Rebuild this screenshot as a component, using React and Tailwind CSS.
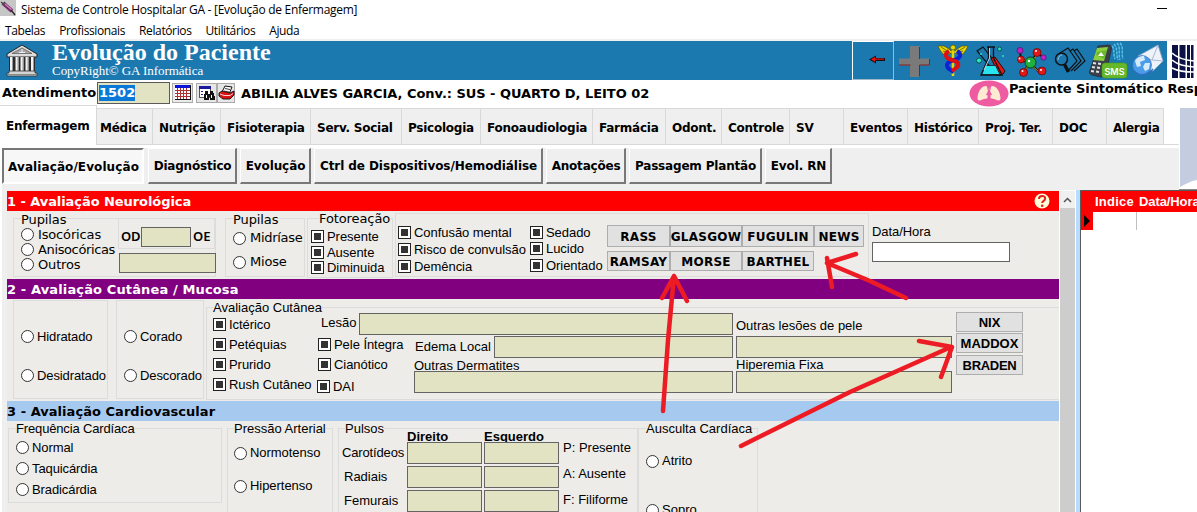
import React from "react";

const verdana = "font-['DejaVu_Sans',sans-serif]";
const arial = "font-['Liberation_Sans',sans-serif]";

/* ---------- form primitives ---------- */

function Radio({ label, className = "", text = "" }) {
  return (
    <div className={`flex shrink-0 items-center whitespace-nowrap ${className}`}>
      <span className="h-[13px] w-[13px] shrink-0 rounded-full border border-[#333] bg-white" />
      <span className={text}>{label}</span>
    </div>
  );
}

function Check({ label, className = "" }) {
  return (
    <div className={`flex h-[13px] shrink-0 items-center gap-[3px] whitespace-nowrap ${className}`}>
      <span className="flex h-[13px] w-[13px] shrink-0 items-center justify-center border border-[#222] bg-white">
        <span className="h-[7px] w-[7px] bg-[#333]" />
      </span>
      <span className="pt-px tracking-[-0.05px]">{label}</span>
    </div>
  );
}

function Field({ className = "" }) {
  return <div className={`shrink-0 border border-[#646464] bg-[#e1e3c3] ${className}`} />;
}

function Legend({ children, className = "" }) {
  return <div className={`relative h-4 shrink-0 self-start whitespace-nowrap bg-[#edece8] ${className}`}>{children}</div>;
}

function Box({ children, className = "" }) {
  return <div className={`flex shrink-0 border border-[#dcdcdc] ${className}`}>{children}</div>;
}

function Push({ children, className = "" }) {
  return (
    <button className={`flex shrink-0 items-center justify-center whitespace-nowrap border border-[#adadad] bg-[#e1e1e1] font-bold ${className}`}>
      {children}
    </button>
  );
}

function SectionBar({ children, className = "" }) {
  return (
    <div className={`flex h-5 shrink-0 items-center justify-between whitespace-nowrap pt-px text-[13px] font-bold leading-4 ${verdana} ${className}`}>
      {children}
    </div>
  );
}

/* ---------- icons ---------- */

function Syringe() {
  return (
    <svg width="16" height="16" viewBox="0 0 16 16" className="shrink-0">
      <rect width="16" height="16" fill="#c6c6c6" />
      <path d="M1 2l4 3M2 5l3-3" stroke="#444" strokeWidth="1.4" />
      <path d="M4 4l8 7" stroke="#7a2a6a" strokeWidth="4" />
      <path d="M5 4l7 6" stroke="#c88ab8" strokeWidth="1.2" />
      <path d="M11 10l4 5" stroke="#222" strokeWidth="1.3" />
    </svg>
  );
}

function Temple() {
  return (
    <svg width="34" height="34" viewBox="0 0 34 34" className="shrink-0">
      <path d="M17 1L2 10v3h30v-3z" fill="#dcdcdc" stroke="#222" />
      <path d="M17 4L7 9.500h20z" fill="#a8a8a8" stroke="#555" strokeWidth=".7" />
      <path d="M14 8.500h6M17 5v4" stroke="#eee" />
      <rect x="4" y="13" width="26" height="15" fill="#2b2b2b" />
      <path d="M6.500 13v15M12 13v15M17 13v15M22 13v15M27.500 13v15" stroke="#f2f2f2" strokeWidth="3" />
      <path d="M7.500 13v15M13 13v15M18 13v15M23 13v15M28.500 13v15" stroke="#9a9a9a" strokeWidth="1" />
      <path d="M4 27h26v2h2v3H2v-3h2z" fill="#d4d4d4" stroke="#333" strokeWidth=".8" />
      <path d="M2 30.500h30" stroke="#777" strokeWidth=".8" />
    </svg>
  );
}

function CalendarIcon() {
  return (
    <svg width="21" height="20" viewBox="0 0 21 20" shapeRendering="crispEdges">
      <rect x=".5" y=".5" width="20" height="19" fill="#eaeaea" stroke="#aaa" />
      <rect x="3" y="2" width="16" height="15" fill="#111" />
      <rect x="3" y="2" width="15" height="3" fill="#0a14d8" />
      <rect x="3" y="5" width="15" height="11" fill="#fff" />
      <path d="M3 7.500h15M3 10.500h15M3 13.500h15M5.500 5v11M8.500 5v11M11.500 5v11M14.500 5v11" stroke="#b03030" />
    </svg>
  );
}

function FindIcon() {
  return (
    <svg width="21" height="20" viewBox="0 0 21 20" shapeRendering="crispEdges">
      <rect x=".5" y=".5" width="20" height="19" fill="#e6e6e6" stroke="#aaa" />
      <rect x="3" y="3" width="11" height="11" fill="#fff" stroke="#555" />
      <rect x="3" y="3" width="12" height="3" fill="#1a1a9c" />
      <path d="M5 8h2M9 8h2M5 11h2" stroke="#1a1a9c" />
      <path d="M9 8h3v3h2V8h3l2 6v3h-5v-3h-1v3H8v-3z" fill="#111" />
      <path d="M10 12h1v3h-1zM15 12h1v3h-1z" fill="#fff" />
    </svg>
  );
}

function PrintIcon() {
  return (
    <svg width="18" height="20" viewBox="0 0 18 20">
      <rect x=".5" y=".5" width="17" height="19" fill="#e6e6e6" stroke="#aaa" />
      <path d="M5 9l3-6 7 1-3 7z" fill="#fff" stroke="#111" />
      <path d="M8 5.500l5 1M7 8l5 1" stroke="#111" strokeWidth=".8" />
      <path d="M2 10l3-2 8 2 4-2v4l-4 4H6l-4-3z" fill="#d81414" stroke="#111" strokeWidth=".9" />
      <path d="M3 11l4 1.500h6l3-2" stroke="#fff" strokeWidth=".8" fill="none" />
    </svg>
  );
}

function BackArrow() {
  return (
    <svg width="18" height="11" viewBox="0 0 18 11">
      <path d="M1 5.500L8 1.500V4h9v3H8v2.500z" fill="#111" />
      <path d="M3 5.300L7 3v1.500h9v1.300H7V8z" fill="#f01010" />
    </svg>
  );
}

function CrossIcon() {
  return (
    <svg width="31" height="31" viewBox="0 0 31 31">
      <path d="M11 0h10v12.500h10v7H21V31H11V19.500H0v-7h11z" fill="#7a7a7a" />
      <path d="M20.500 1v12M0 19h11.500M20.500 19H30.500V13M20.500 19v11.500" stroke="#8b1c1c" fill="none" />
    </svg>
  );
}

function Caduceus() {
  return (
    <svg width="32" height="33" viewBox="0 0 32 33" fill="none">
      <path d="M1 2h6l5 3 2 2 4 0 2-2 5-3h6l-2 4-3 4-4 1-4-2-4 0-4 2-4-1-3-4z" fill="#e8d800" stroke="#5a5200" strokeWidth=".7" />
      <path d="M4 3l8 5M6 7l5 2M28 3l-8 5M26 7l-5 2" stroke="#5a5200" strokeWidth=".8" />
      <path d="M16 3v29" stroke="#e8d800" strokeWidth="2.500" />
      <path d="M20 7c5 3 4 7-3 9s-9 5-5 9l5 3" stroke="#1020d8" strokeWidth="4" />
      <path d="M12 7c-5 3-4 7 3 9s8 5 4 8l-4 3" stroke="#e01010" strokeWidth="4" />
      <circle cx="16" cy="3.500" r="2.500" fill="#e8d800" stroke="#5a5200" strokeWidth=".7" />
    </svg>
  );
}

function Flasks() {
  return (
    <svg width="32" height="33" viewBox="0 0 32 33" fill="none">
      <path d="M2 7l6-4 20 25-2 3-4 0z" fill="#1b79b0" stroke="#111" strokeWidth="1.200" />
      <path d="M16 14l4-1 10 14-2 3-4 1z" fill="#e81414" stroke="#111" />
      <path d="M12 3h8M13.500 3v11L6 31h21L18.500 14V3" stroke="#111" strokeWidth="1.300" />
      <path d="M10.500 21.500h10L25 30.500H6.800z" fill="#28e4f0" stroke="#111" strokeWidth=".8" />
      <path d="M14.500 4v10L9 26" stroke="#eee" strokeWidth=".8" />
      <circle cx="4" cy="16.500" r="2.600" fill="#28e4c8" stroke="#0a5048" />
      <circle cx="24.500" cy="5" r="2" fill="#28e4c8" stroke="#0a5048" />
      <circle cx="28" cy="12" r="1" fill="#28e4c8" />
      <circle cx="6" cy="10" r="1" fill="#28e4c8" />
    </svg>
  );
}

function Molecule() {
  return (
    <svg width="32" height="32" viewBox="0 0 32 32">
      <path d="M5 5l1 9 9 3 7-10M15 17l-7 9M15 17l9 9M22 7l6 4" stroke="#111" strokeWidth="2" fill="none" />
      <path d="M6 13l9 4 8-9M8 26l7-8 9 8" stroke="#e8d820" strokeWidth=".8" fill="none" />
      <circle cx="15.500" cy="16.500" r="5.500" fill="#20b040" stroke="#0a4018" />
      <g fill="#e01818" stroke="#600" strokeWidth=".7">
        <circle cx="6" cy="13.500" r="3.500" />
        <circle cx="22" cy="6.500" r="4" />
        <circle cx="8.500" cy="26.500" r="4" />
        <circle cx="27" cy="25" r="4" />
      </g>
      <g fill="#c020c8" stroke="#501050" strokeWidth=".7">
        <circle cx="5" cy="4.500" r="3" />
        <circle cx="28.500" cy="11.500" r="2.700" />
      </g>
      <g fill="#fff">
        <circle cx="4.500" cy="12.500" r="1" /><circle cx="21" cy="5" r="1" /><circle cx="7.500" cy="25" r="1" />
        <circle cx="26" cy="24" r="1" /><circle cx="14" cy="15" r="1.200" />
      </g>
    </svg>
  );
}

function SearchPapers() {
  return (
    <svg width="32" height="28" viewBox="0 0 32 28" fill="none" stroke="#111" strokeWidth="1.200">
      <path d="M6 6l8-5 9 13-9 10M16 4l3-2 8 12-10 10M20 4l3-2 8 12-11 10" />
      <circle cx="7.500" cy="12" r="6" fill="#1b79b0" strokeWidth="1.500" />
      <path d="M4 13c0-3 2-5 4-5" stroke="#9cd" strokeWidth=".9" />
      <path d="M10.500 17.500l4 7.500" strokeWidth="3.500" />
    </svg>
  );
}

function SmsPhone() {
  return (
    <svg width="40" height="37" viewBox="0 0 40 37">
      <path d="M10 4l10-1c3 0 4 2 3.500 4L18 31c-1 3-3 4-6 4l-8-2c-3-1-3-3-2-5z" fill="#3c4048" stroke="#222" strokeWidth=".6" />
      <path d="M9 6l11-1-4 14-11-1z" fill="#8cd040" />
      <path d="M9 10l10-2-3 9-8-4z" fill="#48a018" opacity=".5" />
      <path d="M10 14l3-4 3 4z" fill="#fff" />
      <path d="M5 21l3 .4M10 21.600l3 .4M4 25l3 .4M9 25.600l3 .4M3 29l3 .4M8 29.600l3 .4" stroke="#dfe3e8" strokeWidth="2" />
      <path d="M24 4c3 3 1 8 3 13M26 2c4 4 2 11 4 16M29 1c4 4 1 11 3 17M32 1c4 4 1 10 3 16" stroke="#58c8e8" strokeWidth="1.400" strokeDasharray="3 1" fill="none" />
      <rect x="14" y="21" width="25" height="15" rx="3" fill="#66b82a" stroke="#4c9a18" strokeWidth=".6" />
      <text x="26.500" y="32.500" textAnchor="middle" fontFamily="Inter, sans-serif" fontSize="9" fontWeight="600" fill="#fff">SMS</text>
    </svg>
  );
}

function MailGlobe() {
  return (
    <svg width="34" height="34" viewBox="0 0 34 34">
      <path d="M7 12L27 1l5 16-10 10-12-3z" fill="#eef3fa" stroke="#8ba3c4" strokeWidth=".8" />
      <path d="M7 12l14 4L27 1M21 16l11 1" stroke="#a9b9d0" fill="none" />
      <circle cx="11" cy="21" r="9.500" fill="#4a9be8" stroke="#2a68b0" strokeWidth=".6" />
      <path d="M4 17c2-4 6-5 9-5l1 4-5 2 1 4-4 1zM14 19l5 0-1 6-4 2-2-4z" fill="#d5ebfc" />
      <path d="M3 27c6 6 13 5 19-2" stroke="#2f6fc0" strokeWidth="1.500" fill="none" />
    </svg>
  );
}

function HospitalMark() {
  return (
    <svg width="22" height="33" viewBox="0 0 22 33">
      <rect width="22" height="33" fill="#fff" />
      <g fill="#0b1145">
        <rect x="0" y="0" width="6" height="33" />
        <rect x="7.500" y="0" width="6" height="33" />
        <rect x="15" y="0" width="3" height="33" />
        <rect x="19" y="0" width="2.500" height="33" />
      </g>
      <path d="M0 8c5 5 12 7 22 8M0 15c6 5 12 6 22 7M0 23c6 3 12 4 22 4" stroke="#fff" strokeWidth="1.600" fill="none" />
    </svg>
  );
}

function Lungs() {
  return (
    <svg width="40" height="27" viewBox="0 0 40 27" className="shrink-0">
      <ellipse cx="20" cy="13.500" rx="19.500" ry="13" fill="#ef5ba1" />
      <path d="M17 6c-5 0-8 6-8.500 12 0 3 2 3 5 1.500 2-.8 4.500-.5 5-1.500V12l1.500-6 1.500 6v6c.5 1 3 .7 5 1.500 3 1.500 5 1.500 5-1.500C31 12 28 6 23 6c-1 0-1.500 2-1.500 4h-3C18.500 8 18 6 17 6z" fill="#fdebd3" />
      <path d="M20 4v8l-2.500 3M20 12l2.500 3" stroke="#ef5ba1" strokeWidth="1.500" fill="none" />
    </svg>
  );
}

function HelpBadge() {
  return (
    <svg width="16" height="16" viewBox="0 0 16 16" className="-mt-px">
      <circle cx="8" cy="8" r="7.500" fill="#fffdd8" />
      <path d="M5 6c0-4 6.200-4 6.200-.5C11.200 8 8.200 7.800 8.200 10" stroke="#e02020" strokeWidth="2" fill="none" />
      <circle cx="8.200" cy="12.700" r="1.300" fill="#e02020" />
    </svg>
  );
}

/* ---------- header ---------- */

function Header() {
  return (
    <div className="flex h-10 shrink-0 bg-white">
      <div className="flex h-[39px] w-[1167px] shrink-0 bg-[#1c79b0]">
        <div className="pl-[5px] pt-[3px]"><Temple /></div>
        <div className="ml-[13px] w-[800px] font-['Liberation_Serif',serif] text-white">
          <h1 className="-mt-px text-[24px] font-bold leading-6">Evolução do Paciente</h1>
          <p className="-mt-px text-[13px] leading-4 tracking-[-0.04px]">CopyRight© GA Informática</p>
        </div>
        <button className="flex w-[42px] items-center justify-center border border-b-[#9fb8c8] border-l-white border-r-[#9fb8c8] border-t-white pb-[2px] pl-[7px]">
          <BackArrow />
        </button>
        <div className="ml-[5px] flex items-start">
          <div className="w-[38px] pt-[5px]"><CrossIcon /></div>
          <div className="w-[38px] pt-[3px]"><Caduceus /></div>
          <div className="w-[40px] pt-[3px]"><Flasks /></div>
          <div className="w-[39px] pt-[5px]"><Molecule /></div>
          <div className="w-[34px] pt-[6px]"><SearchPapers /></div>
          <div className="w-[43px] pt-px"><SmsPhone /></div>
          <div className="w-[34px] pt-[3px]"><MailGlobe /></div>
        </div>
      </div>
      <div className="pl-[5px] pt-1"><HospitalMark /></div>
    </div>
  );
}

const tabs = [
  ["Médica", "w-[55px] pl-[3px]"],
  ["Nutrição", "w-[68px] pl-[6px]"],
  ["Fisioterapia", "w-[90px] pl-[6px]"],
  ["Serv. Social", "w-[91px] pl-[6px]"],
  ["Psicologia", "w-[79px] pl-[6px]"],
  ["Fonoaudiologia", "w-[112px] pl-[6px]"],
  ["Farmácia", "w-[73px] pl-[6px]"],
  ["Odont.", "w-[56px] pl-[6px]"],
  ["Controle", "w-[68px] pl-[6px]"],
  ["SV", "w-[54px] pl-[6px]"],
  ["Eventos", "w-[64px] pl-[6px]"],
  ["Histórico", "w-[71px] pl-[6px]"],
  ["Proj. Ter.", "w-[74px] pl-[6px]"],
  ["DOC", "w-[54px] pl-[6px]"],
  ["Alergia", "w-[58px] border-r pl-[6px]"],
];

const tools = [
  ["Diagnóstico", "ml-1 w-[89px] tracking-[-0.2px]"],
  ["Evolução", "ml-[3px] w-[71px] tracking-[-0.1px]"],
  ["Ctrl de Dispositivos/Hemodiálise", "ml-[3px] w-[229px] tracking-[-0.08px]"],
  ["Anotações", "ml-[3px] w-[80px] tracking-[-0.2px]"],
  ["Passagem Plantão", "ml-[3px] w-[133px] tracking-[-0.18px]"],
  ["Evol. RN", "ml-[3px] w-[67px] tracking-[-0.1px]"],
];

function Navigation() {
  return (
    <div className={`flex h-[85px] shrink-0 text-xs font-bold leading-4 ${verdana}`}>
      <div className="flex w-[1179px] shrink-0 flex-col">
        <div className="flex h-10 shrink-0 whitespace-nowrap tracking-[-0.24px]">
          <div className="w-[97px] border-r border-t border-[#d9d9d9] pl-[6px] pt-3">Enfermagem</div>
          <div className="flex grow items-end border-b border-[#d9d9d9]">
            {tabs.map(([name, cls], i) => (
              <div key={name} className={`h-9 shrink-0 border-t border-[#d9d9d9] bg-[#efefef] pt-[11px] ${i ? "border-l" : ""} ${cls}`}>{name}</div>
            ))}
          </div>
        </div>
        <div className="ml-[2px] mt-[3px] flex h-[42px] shrink-0 bg-[#efefef]">
          <div className="flex h-9 w-[142px] shrink-0 items-center justify-center border-2 border-b-white border-l-[#777] border-r-white border-t-[#777] bg-[#f7f7f7] pl-px pt-px tracking-[0.09px]">
            Avaliação/Evolução
          </div>
          {tools.map(([name, cls]) => (
            <button key={name} className={`flex h-9 shrink-0 items-center justify-center whitespace-nowrap border-b-2 border-l border-r-2 border-t border-b-[#787878] border-l-white border-r-[#787878] border-t-white pl-px ${cls}`}>
              {name}
            </button>
          ))}
        </div>
      </div>
      <svg width="18" height="85" viewBox="0 0 18 85">
        <path d="M1 3h17v72C11 76 5 80 1 82z" fill="#c4cde0" />
        <path d="M0 84.500h18" stroke="#888" />
      </svg>
    </div>
  );
}

/* ---------- sections ---------- */

function Neurological() {
  return (
    <>
      <SectionBar className="bg-[#ff0000] pr-[9px] tracking-[-0.07px] text-white">
        <span>1 - Avaliação Neurológica</span>
        <HelpBadge />
      </SectionBar>
      <div className={`flex h-[68px] shrink-0 items-start pl-[6px] text-[13px] leading-4 ${arial}`}>
        <Box className={`mt-[7px] h-[59px] w-[203px] ${verdana}`}>
          <div className="flex w-[104px] shrink-0 flex-col pl-[7px]">
            <Legend className="-mt-[7px] mb-[-1px] tracking-[-0.1px]">Pupilas</Legend>
            <Radio label="Isocóricas" className="h-[15px] gap-1" text="pt-px tracking-[-0.15px]" />
            <Radio label="Anisocóricas" className="h-[15px] gap-1" text="pt-px tracking-[-0.37px]" />
            <Radio label="Outros" className="h-[15px] gap-1" text="pt-px tracking-[-0.15px]" />
          </div>
          <div className="flex flex-col">
            <div className="flex h-[30px] w-[97px] border border-t-0 border-[#dcdcdc] pl-[2px] font-['Noto_Sans',sans-serif] text-[13px] font-semibold">
              <span className="mt-[9px] w-5 tracking-[-0.2px]">OD</span>
              <Field className="mt-2 h-5 w-[50px]" />
              <span className="ml-[2px] mt-[9px]">OE</span>
            </div>
            <Field className="ml-px mt-1 h-5 w-[97px]" />
          </div>
        </Box>
        <Box className={`ml-[9px] mt-[7px] h-[59px] w-[80px] flex-col pl-[7px] ${verdana}`}>
          <Legend className="-mt-[7px] tracking-[-0.1px]">Pupilas</Legend>
          <Radio label="Midríase" className="mt-[2px] h-4 gap-1" text="tracking-[-0.3px]" />
          <Radio label="Miose" className="mt-2 h-4 gap-1" text="tracking-[-0.2px]" />
        </Box>
        <Box className="ml-[2px] mt-[7px] h-[60px] w-[86px] flex-col pl-[3px]">
          <Legend className={`-mt-2 ml-[8px] tracking-[-0.1px] ${verdana}`}>Fotoreação</Legend>
          <Check label="Presente" className="mt-[3px]" />
          <Check label="Ausente" className="mt-[3px]" />
          <Check label="Diminuida" className="mt-[2px]" />
        </Box>
        <Box className="ml-[2px] mt-[2px] h-[64px] w-[474px]">
          <div className="w-[132px] pl-[2px]">
            <Check label="Confusão mental" className="mt-3" />
            <Check label="Risco de convulsão" className="mt-1" />
            <Check label="Demência" className="mt-1" />
          </div>
          <div className="w-[79px] pl-[2px]">
            <Check label="Sedado" className="mt-3" />
            <Check label="Lucido" className="mt-[3px]" />
            <Check label="Orientado" className="mt-1" />
          </div>
          <div className={`pt-[11px] text-xs tracking-[0.25px] ${verdana}`}>
            <div className="flex">
              <Push className="h-[22px] w-[63px] pt-px">RASS</Push>
              <Push className="h-[22px] w-[72px] pt-px">GLASGOW</Push>
              <Push className="h-[22px] w-[72px] pt-px">FUGULIN</Push>
              <Push className="h-[22px] w-[50px] pt-px">NEWS</Push>
            </div>
            <div className="mt-1 flex">
              <Push className="h-5 w-[63px] pt-px">RAMSAY</Push>
              <Push className="h-5 w-[72px] pt-px">MORSE</Push>
              <Push className="h-5 w-[72px] pt-px">BARTHEL</Push>
            </div>
          </div>
        </Box>
        <div className="ml-[3px] pt-[13px]">
          <div className="h-[17px] tracking-[-0.08px]">Data/Hora</div>
          <div className="mt-px h-5 w-[138px] border border-[#646464] bg-white" />
        </div>
      </div>
    </>
  );
}

function Skin() {
  return (
    <>
      <SectionBar className="bg-[#800080] tracking-[0.13px] text-white">2 - Avaliação Cutânea / Mucosa</SectionBar>
      <div className={`flex h-[102px] shrink-0 items-start pl-[6px] text-[13px] leading-4 ${arial}`}>
        <Box className="mt-px h-[99px] w-[95px] flex-col pl-[7px]">
          <Radio label="Hidratado" className="mt-[27px] h-4 gap-[3px]" text="pt-px tracking-[-0.1px]" />
          <Radio label="Desidratado" className="mt-[23px] h-4 gap-[3px]" text="pt-px tracking-[-0.1px]" />
        </Box>
        <Box className="ml-2 mt-px h-[99px] w-[88px] flex-col pl-[7px]">
          <Radio label="Corado" className="mt-[27px] h-4 gap-[3px]" text="pt-px tracking-[-0.1px]" />
          <Radio label="Descorado" className="mt-[23px] h-4 gap-[3px]" text="pt-px tracking-[-0.1px]" />
        </Box>
        <Box className="ml-[2px] mt-2 h-[93px] w-[853px] border-r-0">
          <div className="flex w-[111px] shrink-0 flex-col pl-[6px]">
            <Legend className="-mt-2">Avaliação Cutânea</Legend>
            <Check label="Ictérico" className="mt-[2px]" />
            <Check label="Petéquias" className="mt-[7px]" />
            <Check label="Prurido" className="mt-[7px]" />
            <Check label="Rush Cutâneo" className="mt-[7px]" />
          </div>
          <div className="w-[415px] shrink-0 pt-[5px]">
            <div className="flex">
              <span className="w-[41px] pl-[3px] pt-[2px]">Lesão</span>
              <Field className="h-[22px] w-[374px]" />
            </div>
            <div className="mt-px flex">
              <div className="w-24 shrink-0">
                <Check label="Pele Íntegra" className="mt-[2px]" />
                <Check label="Cianótico" className="mt-[7px]" />
                <Check label="DAI" className="-ml-px mt-[9px]" />
              </div>
              <div>
                <div className="flex">
                  <span className="w-20 whitespace-nowrap pl-px pt-[3px]">Edema Local</span>
                  <Field className="h-[22px] w-[239px]" />
                </div>
                <div className="h-[13px] whitespace-nowrap">Outras Dermatites</div>
                <Field className="relative h-[22px] w-[319px]" />
              </div>
            </div>
          </div>
          <div className="ml-[3px] w-[216px] shrink-0 pt-[10px]">
            <div className="h-[18px]">Outras lesões de pele</div>
            <Field className="h-[22px] w-full" />
            <div className="-mt-px h-[14px]">Hiperemia Fixa</div>
            <Field className="relative h-[22px] w-full" />
          </div>
          <div className="ml-1 flex flex-col pt-1">
            <Push className="h-5 w-[67px] pt-px">NIX</Push>
            <Push className="mt-px h-5 w-[67px] pt-px">MADDOX</Push>
            <Push className="mt-[2px] h-5 w-[67px] pt-px tracking-[-0.3px]">BRADEN</Push>
          </div>
        </Box>
      </div>
    </>
  );
}

function Cardio() {
  return (
    <>
      <SectionBar className="bg-[#a6c9f0] tracking-[0.04px] text-black">3 - Avaliação Cardiovascular</SectionBar>
      <div className={`flex h-[91px] shrink-0 items-start overflow-hidden pl-px pt-[7px] text-[13px] leading-4 ${arial}`}>
        <Box className="h-[75px] w-[214px] flex-col pl-[7px]">
          <Legend className="-mt-2 tracking-[-0.15px]">Frequência Cardíaca</Legend>
          <Radio label="Normal" className="h-[21px] gap-[3px]" text="tracking-[-0.1px]" />
          <Radio label="Taquicárdia" className="h-[21px] gap-[3px]" text="tracking-[-0.1px]" />
          <Radio label="Bradicárdia" className="h-[21px] gap-[3px]" text="tracking-[-0.1px]" />
        </Box>
        <Box className="ml-[5px] h-[90px] w-[106px] flex-col pl-[6px]">
          <Legend className="-mt-2">Pressão Arterial</Legend>
          <Radio label="Normotenso" className="mt-2 h-4 gap-[3px]" text="tracking-[-0.05px]" />
          <Radio label="Hipertenso" className="mt-[17px] h-4 gap-[3px]" text="tracking-[-0.05px]" />
        </Box>
        <Box className="ml-[5px] h-[90px] w-[300px]">
          <div className="flex w-[68px] shrink-0 flex-col pl-[3px]">
            <Legend className="-mt-2 ml-[3px]">Pulsos</Legend>
            <span className="mt-2 tracking-[-0.15px]">Carotídeos</span>
            <span className="ml-[2px] mt-2">Radiais</span>
            <span className="ml-[2px] mt-2">Femurais</span>
          </div>
          <div className="flex flex-col gap-[2px] font-bold">
            <div className="-mb-[2px] h-[13px]">Direito</div>
            <Field className="relative h-[22px] w-[75px]" />
            <Field className="h-[22px] w-[75px]" />
            <Field className="h-[22px] w-[75px]" />
          </div>
          <div className="ml-[2px] flex flex-col gap-[2px] font-bold">
            <div className="-mb-[2px] h-[13px]">Esquerdo</div>
            <Field className="relative h-[22px] w-[75px]" />
            <Field className="h-[22px] w-[75px]" />
            <Field className="h-[22px] w-[75px]" />
          </div>
          <div className="ml-1 flex flex-col gap-[10px] whitespace-nowrap pt-[11px]">
            <span>P: Presente</span>
            <span>A: Ausente</span>
            <span>F: Filiforme</span>
          </div>
        </Box>
        <Box className="h-[110px] w-[120px] flex-col pl-[7px]">
          <Legend className="-mt-2">Ausculta Cardíaca</Legend>
          <Radio label="Atrito" className="mt-4 h-4 gap-[3px]" />
          <Radio label="Sopro" className="mt-[33px] h-4 gap-[3px]" />
        </Box>
      </div>
    </>
  );
}

function HistoryGrid() {
  return (
    <div className={`flex grow flex-col border-l border-[#5a5a5a] bg-white text-[13px] leading-4 ${arial}`}>
      <div className="flex h-[22px] shrink-0 items-center whitespace-nowrap border-t border-[#5a5a5a] bg-[#ff0000] pt-px font-bold text-white">
        <span className="ml-[14px] w-[44px] shrink-0 tracking-[0.24px]">Indice</span>
        <span className="w-[58px] tracking-[-0.1px]">Data/Hora</span>
      </div>
      <div className="flex h-[18px]">
        <div className="flex w-3 items-center bg-[#ff0000] pl-[3px]">
          <svg width="6" height="12" viewBox="0 0 6 12"><path d="M0 0l6 6-6 6z" fill="#000" /></svg>
        </div>
        <div className="w-[44px] border-r border-[#c0c0c0]" />
      </div>
    </div>
  );
}

function Annotations() {
  return (
    <svg className="pointer-events-none absolute left-0 top-0" width="1197" height="512" viewBox="0 0 1197 512" fill="none" stroke="#ed1c24" strokeWidth="4.500" strokeLinecap="round" strokeLinejoin="round">
      <path d="M663 411L668 340L674 276M662 298L674 276L687 301" />
      <path d="M906 298L870 281L827 263M856 254L827 263M827 258L832 287" />
      <path d="M741 446L850 392L951 347M919 341L952 347L941 377" />
    </svg>
  );
}

export default function App() {
  return (
    <div className="relative flex h-[512px] w-[1197px] flex-col overflow-hidden bg-white text-black">
      <div className="flex h-5 shrink-0 items-start justify-between font-['Open_Sans',sans-serif] text-xs leading-5">
        <div className="flex gap-[5px]">
          <Syringe />
          <span className="tracking-[-0.28px]">Sistema de Controle Hospitalar GA - [Evolução de Enfermagem]</span>
        </div>
        <span className="mr-[30px] mt-2 h-px w-[10px] bg-black" />
      </div>
      <div className="flex h-[21px] shrink-0 gap-[14px] border-b-2 border-[#f0f0f0] pl-[5px] font-['Open_Sans',sans-serif] text-xs leading-[22px] tracking-[-0.38px]">
        <span>Tabelas</span>
        <span>Profissionais</span>
        <span>Relatórios</span>
        <span>Utilitários</span>
        <span>Ajuda</span>
      </div>
      <Header />
      <div className={`-mt-px flex h-[25px] shrink-0 whitespace-nowrap text-[13px] font-bold leading-4 ${verdana}`}>
        <span className="ml-[2px] mt-[5px] w-[95px] shrink-0 tracking-[-0.08px]">Atendimento</span>
        <div className="mt-[2px] flex h-[22px] w-[73px] shrink-0 items-center border border-[#5a5a5a] bg-[#e1e3c3] pl-px">
          <span className="bg-[#0a78d7] text-white">1502</span>
        </div>
        <div className="ml-[2px] mt-[3px] shrink-0"><CalendarIcon /></div>
        <div className="ml-[3px] mt-[3px] shrink-0"><FindIcon /></div>
        <div className="mt-[3px] shrink-0"><PrintIcon /></div>
        <span className="ml-[6px] mt-[6px] w-[728px] shrink-0 tracking-[-0.04px]">ABILIA ALVES GARCIA, Conv.: SUS - QUARTO D, LEITO 02</span>
        <Lungs />
        <span className="mt-px shrink-0 tracking-[-0.08px]">Paciente Sintomático Resp</span>
      </div>
      <Navigation />
      <div className="flex grow">
        <div className="ml-[2px] w-[5px] bg-[#efefef]" />
        <div className="flex w-[1052px] shrink-0 flex-col bg-[#edece8] pt-px">
          <Neurological />
          <Skin />
          <Cardio />
        </div>
        <div className="ml-px mt-px w-[15px] shrink-0 bg-[#cdcdcd]">
          <div className="flex h-[17px] items-center justify-center bg-[#f0f0f0]">
            <svg width="9" height="6" viewBox="0 0 9 6"><path d="M1 5l3.500-3.500L8 5" stroke="#555" strokeWidth="1.500" fill="none" /></svg>
          </div>
        </div>
        <div className="ml-px w-1 shrink-0 bg-[#b8dcff]" />
        <HistoryGrid />
      </div>
      <Annotations />
    </div>
  );
}
